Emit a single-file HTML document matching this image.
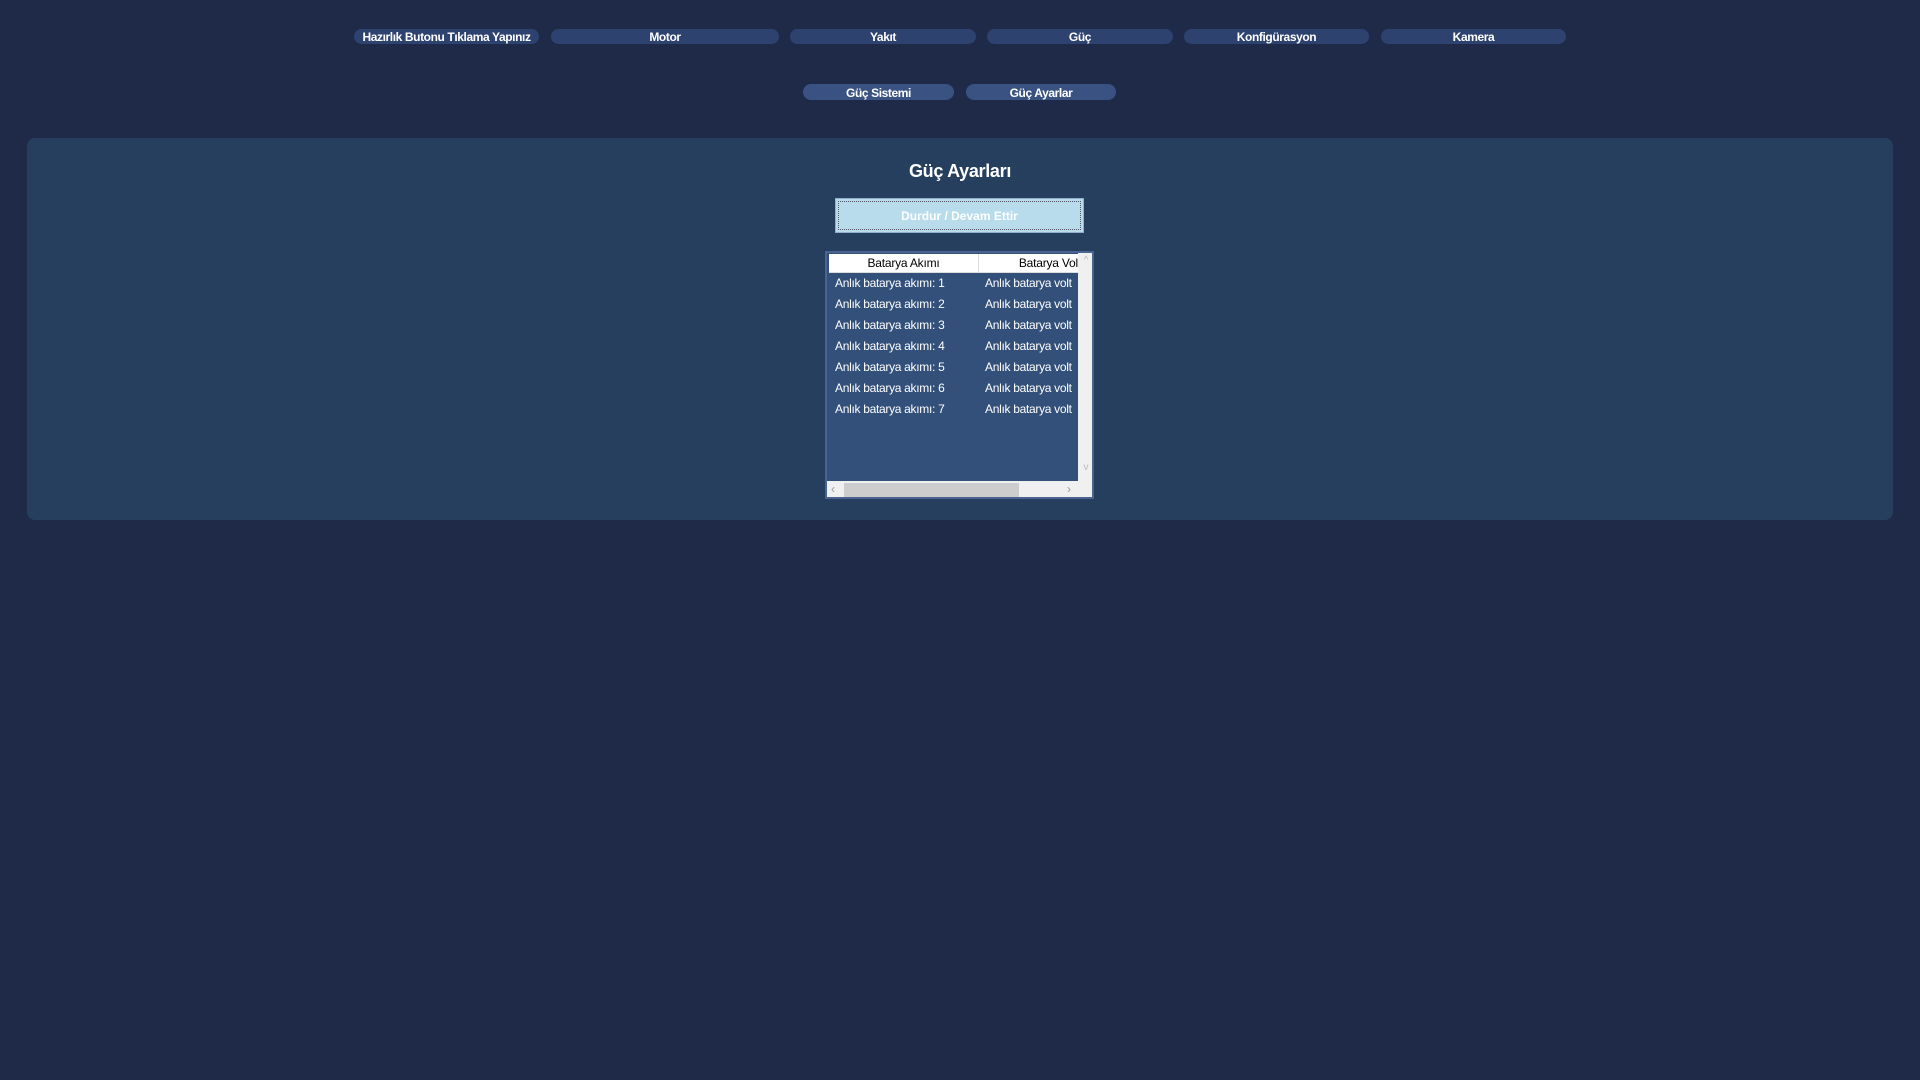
<!DOCTYPE html>
<html><head><meta charset="utf-8"><style>
*{margin:0;padding:0;box-sizing:border-box}
body{width:1920px;height:1080px;background:#1f2a48;font-family:"Liberation Sans",sans-serif;position:relative;overflow:hidden;color:#fff}
.b{position:absolute;background:#2e4270;border-radius:8px;font-size:12px;font-weight:bold;text-align:center;color:#fff;letter-spacing:-0.4px}
.t{top:29px;height:15px;line-height:17px}
.s{top:84px;height:16px;line-height:18px;background:#3a5282}
#panel{position:absolute;left:27px;top:138px;width:1866px;height:382px;background:#263f5e;border-radius:8px}
h1{position:absolute;left:0;width:1920px;top:161px;text-align:center;font-size:18px;font-weight:bold;letter-spacing:-0.3px}
#btn{position:absolute;left:835px;top:198px;width:249px;height:35px;background:#b9dcec;border:1px solid #8fb0c8;color:#fff;font-size:12px;font-weight:bold;text-align:center;line-height:35px}
#btn:after{content:"";position:absolute;left:2px;top:2px;right:2px;bottom:2px;border:1px dotted #556}
#tbl{position:absolute;left:825px;top:251px;width:269px;height:248px;background:#32507a;border:2px solid #4a6390;overflow:hidden}
.hd{position:absolute;top:1px;height:19px;background:#fff;color:#000;font-size:12px;line-height:19px;text-align:center;border-bottom:1px solid #ddd;letter-spacing:-0.2px}
.r{position:absolute;font-size:12px;white-space:nowrap;letter-spacing:-0.3px}
#vs{position:absolute;left:251px;top:0;width:16px;height:228px;background:#f0f0f0;color:#bbb;font-size:10px;text-align:center}
#hs{position:absolute;left:0;top:228px;width:267px;height:18px;background:#f0f0f0;color:#999;font-size:12px}
#th{position:absolute;left:17px;top:230px;width:175px;height:15px;background:#cdcdcd}
</style></head><body>
<div class="b t" style="left:354px;width:185px">Hazırlık Butonu Tıklama Yapınız</div>
<div class="b t" style="left:551px;width:228px">Motor</div>
<div class="b t" style="left:790px;width:186px">Yakıt</div>
<div class="b t" style="left:987px;width:186px">Güç</div>
<div class="b t" style="left:1184px;width:185px">Konfigürasyon</div>
<div class="b t" style="left:1381px;width:185px">Kamera</div>
<div class="b s" style="left:803px;width:151px">Güç Sistemi</div>
<div class="b s" style="left:966px;width:150px">Güç Ayarlar</div>
<div id="panel"></div>
<h1>Güç Ayarları</h1>
<div id="btn">Durdur / Devam Ettir</div>
<div id="tbl">
<div class="hd" style="left:2px;width:150px;border-right:1px solid #ddd">Batarya Akımı</div>
<div class="hd" style="left:152px;width:99px;text-align:right">Batarya Vol</div>
<div class="r" style="left:8px;top:23px">Anlık batarya akımı: 1</div><div class="r" style="left:158px;top:23px">Anlık batarya volt</div>
<div class="r" style="left:8px;top:44px">Anlık batarya akımı: 2</div><div class="r" style="left:158px;top:44px">Anlık batarya volt</div>
<div class="r" style="left:8px;top:65px">Anlık batarya akımı: 3</div><div class="r" style="left:158px;top:65px">Anlık batarya volt</div>
<div class="r" style="left:8px;top:86px">Anlık batarya akımı: 4</div><div class="r" style="left:158px;top:86px">Anlık batarya volt</div>
<div class="r" style="left:8px;top:107px">Anlık batarya akımı: 5</div><div class="r" style="left:158px;top:107px">Anlık batarya volt</div>
<div class="r" style="left:8px;top:128px">Anlık batarya akımı: 6</div><div class="r" style="left:158px;top:128px">Anlık batarya volt</div>
<div class="r" style="left:8px;top:149px">Anlık batarya akımı: 7</div><div class="r" style="left:158px;top:149px">Anlık batarya volt</div>
<div id="vs"><div style="margin-top:2px">^</div><div style="margin-top:196px">v</div></div>
<div id="hs"><span style="position:absolute;left:4px;top:1px">&lsaquo;</span><span style="position:absolute;left:240px;top:1px">&rsaquo;</span></div><div id="th"></div>
</div>
</body></html>
